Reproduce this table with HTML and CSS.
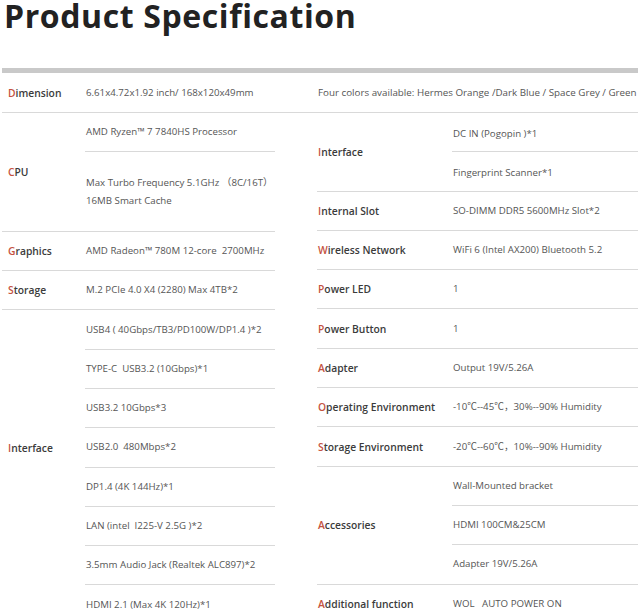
FILE: index.html
```html
<!DOCTYPE html>
<html>
<head>
<meta charset="utf-8">
<link rel="stylesheet" href="styles.css">
</head>
<body>
<div class="page">
  <h1 class="title">Product Specification</h1>
  <div class="bar"></div>
  <div class="dim-row">
    <div class="lcol dim-left">
      <div class="label"><span class="hl">D</span>imension</div>
      <div class="val">6.61x4.72x1.92 inch/ 168x120x49mm</div>
    </div>
    <div class="rcol dim-right">Four colors available: Hermes Orange /Dark Blue / Space Grey / Green</div>
  </div>
  <div class="cols">
    <div class="side left">
      <div class="group">
        <div class="label"><span class="hl">C</span>PU</div>
        <div class="vals">
          <div class="cell">AMD Ryzen™ 7 7840HS Processor</div>
          <div class="cell tall">Max Turbo Frequency 5.1GHz （8C/16T）<br>16MB Smart Cache</div>
        </div>
      </div>
      <div class="group">
        <div class="label"><span class="hl">G</span>raphics</div>
        <div class="vals"><div class="cell">AMD Radeon™ 780M 12-core&nbsp; 2700MHz</div></div>
      </div>
      <div class="group">
        <div class="label"><span class="hl">S</span>torage</div>
        <div class="vals"><div class="cell">M.2 PCIe 4.0 X4 (2280) Max 4TB*2</div></div>
      </div>
      <div class="group grid-group">
        <div class="label row4"><span class="hl">I</span>nterface</div>
        <div class="cell">USB4 ( 40Gbps/TB3/PD100W/DP1.4 )*2</div>
        <div class="cell">TYPE-C&nbsp; USB3.2 (10Gbps)*1</div>
        <div class="cell">USB3.2 10Gbps*3</div>
        <div class="cell">USB2.0&nbsp; 480Mbps*2</div>
        <div class="cell">DP1.4 (4K 144Hz)*1</div>
        <div class="cell">LAN (intel&nbsp; I225-V 2.5G )*2</div>
        <div class="cell">3.5mm Audio Jack (Realtek ALC897)*2</div>
        <div class="cell">HDMI 2.1 (Max 4K 120Hz)*1</div>
      </div>
    </div>
    <div class="side right">
      <div class="group">
        <div class="label"><span class="hl">I</span>nterface</div>
        <div class="vals lowered">
          <div class="cell">DC IN (Pogopin )*1</div>
          <div class="cell">Fingerprint Scanner*1</div>
        </div>
      </div>
      <div class="group">
        <div class="label"><span class="hl">I</span>nternal Slot</div>
        <div class="vals"><div class="cell">SO-DIMM DDR5 5600MHz Slot*2</div></div>
      </div>
      <div class="group">
        <div class="label"><span class="hl">W</span>ireless Network</div>
        <div class="vals"><div class="cell">WiFi 6 (Intel AX200) Bluetooth 5.2</div></div>
      </div>
      <div class="group">
        <div class="label"><span class="hl">P</span>ower LED</div>
        <div class="vals"><div class="cell">1</div></div>
      </div>
      <div class="group">
        <div class="label"><span class="hl">P</span>ower Button</div>
        <div class="vals"><div class="cell">1</div></div>
      </div>
      <div class="group">
        <div class="label"><span class="hl">A</span>dapter</div>
        <div class="vals"><div class="cell">Output 19V/5.26A</div></div>
      </div>
      <div class="group">
        <div class="label"><span class="hl">O</span>perating Environment</div>
        <div class="vals"><div class="cell">-10℃--45℃，30%--90% Humidity</div></div>
      </div>
      <div class="group">
        <div class="label"><span class="hl">S</span>torage Environment</div>
        <div class="vals"><div class="cell">-20℃--60℃，10%--90% Humidity</div></div>
      </div>
      <div class="group">
        <div class="label"><span class="hl">A</span>ccessories</div>
        <div class="vals">
          <div class="cell">Wall-Mounted bracket</div>
          <div class="cell">HDMI 100CM&amp;25CM</div>
          <div class="cell">Adapter 19V/5.26A</div>
        </div>
      </div>
      <div class="group">
        <div class="label"><span class="hl">A</span>dditional function</div>
        <div class="vals"><div class="cell">WOL&nbsp;&nbsp; AUTO POWER ON</div></div>
      </div>
    </div>
  </div>
</div>
</body>
</html>
```
FILE: styles.css
```css
html, body {
  margin: 0;
  padding: 0;
  background: #ffffff;
}
body {
  font-family: "Open Sans", "Noto Sans CJK SC", sans-serif;
  color: #555555;
  overflow: hidden;
}
.page {
  padding: 0 2px;
  width: 636px;
}
.title {
  margin: 0;
  padding-left: 2px;
  height: 68px;
  font-size: 32px;
  line-height: 31px;
  font-weight: 700;
  color: #222;
  letter-spacing: 0.6px;
  white-space: nowrap;
}
.bar {
  height: 5px;
  background: #c9c9c9;
}
.dim-row {
  display: flex;
  height: 39px;
  border-bottom: 1px solid #d9d9d9;
  align-items: center;
}
.lcol {
  flex: none;
  width: 273px;
  display: flex;
  align-items: center;
}
.rcol {
  flex: none;
  margin-left: 42px;
  padding-left: 1px;
  font-size: 9.8px;
  white-space: nowrap;
}
.cols {
  display: grid;
  grid-template-columns: 273px 321px;
  column-gap: 42px;
}
.side.left .label,
.dim-left .label {
  width: 83px;
  padding-left: 6px;
}
.side.right .label {
  width: 135px;
  padding-left: 1px;
}
.label {
  box-sizing: border-box;
  flex: none;
  font-size: 10.3px;
  font-weight: 600;
  color: #3b3b3b;
  display: flex;
  align-items: center;
  white-space: nowrap;
}
.hl {
  color: #c4523e;
}
.val {
  font-size: 9.7px;
  padding-left: 1px;
}
.group {
  display: flex;
  border-bottom: 1px solid #d9d9d9;
}
.vals {
  flex: 1;
  display: flex;
  flex-direction: column;
}
.cell {
  box-sizing: border-box;
  height: 39.3px;
  display: flex;
  align-items: center;
  padding-left: 1px;
  font-size: 9.7px;
  line-height: 18px;
  white-space: nowrap;
  border-bottom: 1px solid #d9d9d9;
}
.vals .cell:last-child {
  border-bottom: none;
  height: 38.3px;
}
.vals.lowered .cell {
  padding-top: 4px;
}
.cell.tall {
  height: 79px;
}
.vals .cell.tall:last-child {
  height: 78.5px;
}
.grid-group {
  display: grid;
  grid-template-columns: 83px 1fr;
  border-bottom: none;
}
.grid-group .cell {
  grid-column: 2;
}
.grid-group .label {
  grid-column: 1;
  grid-row: 4;
}
```
